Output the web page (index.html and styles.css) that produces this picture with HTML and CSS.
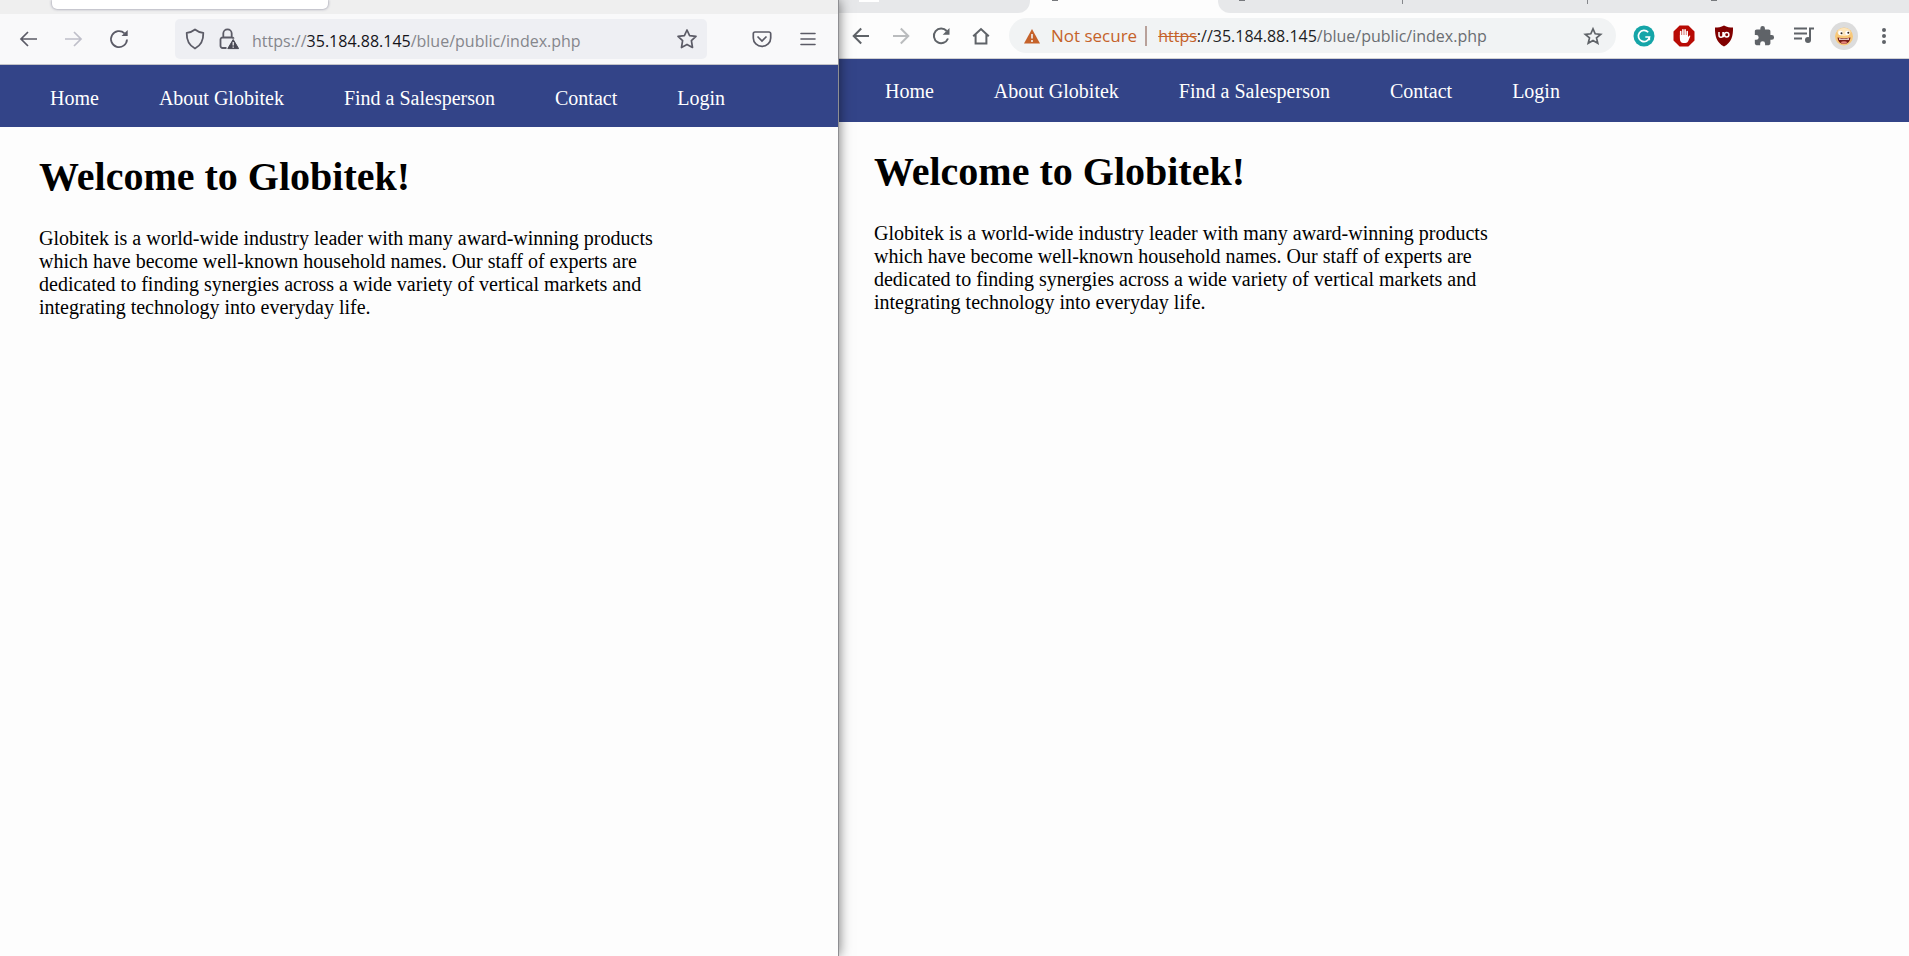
FILE: index.html
```html
<!DOCTYPE html>
<html lang="en">
<head>
<meta charset="utf-8">
<title>Globitek</title>
<link rel="stylesheet" href="styles.css">
</head>
<body>
<div class="desktop">
  <section class="window firefox" aria-label="Firefox window">
    <div class="ff-tabs"><div class="ff-tab"></div></div>
    <div class="ff-toolbar">
      <div class="ff-nav">
        <button class="icon-button" aria-label="Back"><svg width="20" height="20" viewBox="0 0 20 20"><path d="M18 10H2M9 3L2 10L9 17" fill="none" stroke="#5b5b66" stroke-width="1.7"/></svg></button>
        <button class="icon-button" aria-label="Forward"><svg width="20" height="20" viewBox="0 0 20 20"><path d="M1 10H17M10 3L17 10L10 17" fill="none" stroke="#bfbfc9" stroke-width="1.7"/></svg></button>
        <button class="icon-button" aria-label="Reload"><svg width="20" height="20" viewBox="0 0 20 20"><path d="M18 10.500A8 8 0 1 1 15.500 4.300" fill="none" stroke="#5b5b66" stroke-width="1.8"/><path d="M18.700 1V7H12.500Z" fill="#5b5b66"/></svg></button>
      </div>
      <div class="ff-address">
        <button class="icon-button" aria-label="Tracking protection"><svg width="20" height="22" viewBox="0 0 20 22"><path d="M10 1.500C12.500 3.500 15 4.600 18.300 4.900C18.500 12 16 17.500 10 20.500C4 17.500 1.500 12 1.700 4.900C5 4.600 7.500 3.500 10 1.500Z" fill="none" stroke="#5b5b66" stroke-width="1.800" stroke-linejoin="round"/></svg></button>
        <button class="icon-button" aria-label="Connection not secure"><svg width="20" height="22" viewBox="0 0 20 22"><path d="M4.300 9V5.500a4.200 4.200 0 0 1 8.400 0V9M7.500 20H3.500a2 2 0 0 1-2-2v-6.500a2 2 0 0 1 2-2h9.500a2 2 0 0 1 1.800 1.200" fill="none" stroke="#5b5b66" stroke-width="1.800"/><path d="M14.200 11.500L19.600 20.600H8.800Z" fill="#4a4a55" stroke="#4a4a55" stroke-linejoin="round"/><path d="M14.200 14v3.500M14.200 18.500v1.300" stroke="#f0f0f4" stroke-width="1.300"/></svg></button>
        <div class="url" role="textbox" contenteditable="true" spellcheck="false" aria-label="Address">https://<span class="host">35.184.88.145</span>/blue/public/index.php</div>
        <button class="icon-button" aria-label="Bookmark this page"><svg width="22" height="22" viewBox="0 0 22 22"><path d="M11 2L13.600 7.600L20 8.400L15.400 12.600L16.500 19.500L11 16.400L5.500 19.500L6.600 12.600L2 8.400L8.400 7.600Z" fill="none" stroke="#5b5b66" stroke-width="1.700" stroke-linejoin="round"/></svg></button>
      </div>
      <div class="ff-actions">
        <button class="icon-button" aria-label="Save to Pocket"><svg width="20" height="18" viewBox="0 0 20 18"><path d="M3 2H17a1.700 1.700 0 0 1 1.700 1.700V8a8.700 8.300 0 0 1-17.400 0V3.700A1.700 1.700 0 0 1 3 2ZM5.500 6.500L10 11L14.500 6.500" fill="none" stroke="#5b5b66" stroke-width="1.700"/></svg></button>
        <button class="icon-button" aria-label="Open menu"><svg width="16" height="18" viewBox="0 0 16 18"><path d="M1 3.500H15M1 9H15M1 14.500H15" stroke="#5b5b66" stroke-width="1.600" stroke-linecap="round"/></svg></button>
      </div>
    </div>
    <nav class="site-nav">
      <a href="#">Home</a><a href="#">About Globitek</a><a href="#">Find a Salesperson</a><a href="#">Contact</a><a href="#">Login</a>
    </nav>
    <main class="page">
      <h1>Welcome to Globitek!</h1>
      <p>Globitek is a world-wide industry leader with many award-winning products which have become well-known household names. Our staff of experts are dedicated to finding synergies across a wide variety of vertical markets and integrating technology into everyday life.</p>
    </main>
  </section>

  <section class="window chrome" aria-label="Chrome window">
    <div class="cr-tabs">
      <div class="cr-tab first"><span class="favicon"></span></div>
      <div class="cr-tab active"><span class="globe"></span></div>
      <div class="cr-tab rest"><span class="globe"></span><i class="divider"></i><i class="divider"></i><span class="globe end"></span></div>
    </div>
    <div class="cr-toolbar">
      <div class="cr-nav">
        <button class="icon-button" aria-label="Back"><svg width="20" height="20" viewBox="0 0 20 20"><path d="M18 10H3M10.200 2.500L2.700 10L10.200 17.500" fill="none" stroke="#5f6368" stroke-width="2"/></svg></button>
        <button class="icon-button" aria-label="Forward"><svg width="20" height="20" viewBox="0 0 20 20"><path d="M2 10H17M9.800 2.500L17.300 10L9.800 17.500" fill="none" stroke="#babcbe" stroke-width="2"/></svg></button>
        <button class="icon-button" aria-label="Reload"><svg width="20" height="20" viewBox="0 0 20 20"><path d="M17 12.500A7.300 7.300 0 1 1 15.700 5" fill="none" stroke="#5f6368" stroke-width="2"/><path d="M18.500 2V8.800H11.700Z" fill="#5f6368"/></svg></button>
        <button class="icon-button" aria-label="Home"><svg width="20" height="20" viewBox="0 0 20 20"><path d="M2.200 10.200L10 3L17.800 10.200M4.600 8.500V17.500H15.400V8.500" fill="none" stroke="#5f6368" stroke-width="2"/></svg></button>
      </div>
      <div class="cr-address">
        <button class="not-secure"><svg width="16" height="16" viewBox="0 0 16 16"><path d="M8 1L16 15.500H0Z" fill="#c5622a"/><path d="M8 6v4.500M8 12v2" stroke="#f1f3f4" stroke-width="1.600"/></svg><span>Not secure</span></button>
        <div class="url" role="textbox" contenteditable="true" spellcheck="false" aria-label="Address"><s>https</s><span class="slashes">://</span><span class="host">35.184.88.145</span>/blue/public/index.php</div>
        <button class="icon-button" aria-label="Bookmark this tab"><svg width="20" height="20" viewBox="0 0 20 20"><path d="M10 2.800L12.200 7.800L17.700 8.300L13.500 11.900L14.800 17.300L10 14.400L5.200 17.300L6.500 11.900L2.300 8.300L7.800 7.800Z" fill="none" stroke="#5f6368" stroke-width="1.700"/></svg></button>
      </div>
      <div class="cr-actions">
        <button class="icon-button" aria-label="Grammarly"><svg width="22" height="22" viewBox="0 0 22 22"><circle cx="11" cy="11" r="10.500" fill="#15a5a8"/><path d="M15.200 7.300A5.600 5.600 0 1 0 16.500 12H12.300M16.300 12V15.300" fill="none" stroke="#fff" stroke-width="1.700"/></svg></button>
        <button class="icon-button" aria-label="AdBlock"><svg width="22" height="22" viewBox="0 0 22 22"><path d="M6.600.5h8.800l6.100 6.100v8.800l-6.100 6.100H6.600L.5 15.400V6.600Z" fill="#b80b05"/><path d="M7.700 12.500V6.500M9.900 11V4.800M12.100 11V4.800M14.200 12V6.500" stroke="#fff" stroke-width="1.600" stroke-linecap="round"/><path d="M6.900 10h8.100V12l1.300-1.300c.8-.4 1.200.2.900.9L15.300 16c-.6 1.300-1.500 2-2.800 2H10.300c-2.300 0-3.400-1.800-3.400-4Z" fill="#fff"/></svg></button>
        <button class="icon-button" aria-label="uBlock Origin"><svg width="22" height="22" viewBox="0 0 22 22"><path d="M11 .5C14 2.200 17 2.500 20 2.500C20.200 11 18.500 17.500 11 21.500C3.500 17.500 1.800 11 2 2.500C5 2.500 8 2.200 11 .5Z" fill="#800000"/><path d="M6 7v3.200a2 2 0 0 0 4 0V7M10.500 12.200V7" fill="none" stroke="#fff" stroke-width="1.500"/><circle cx="13.700" cy="9.800" r="2.200" fill="none" stroke="#fff" stroke-width="1.500"/></svg></button>
        <button class="icon-button" aria-label="Extensions"><svg width="22" height="22" viewBox="0 0 24 24"><path d="M20.500 11H19V7c0-1.100-.9-2-2-2h-4V3.500a2.500 2.500 0 0 0-5 0V5H4c-1.100 0-2 .9-2 2v3.800h1.500a2.700 2.700 0 0 1 0 5.400H2V20c0 1.100.9 2 2 2h3.800v-1.500a2.700 2.700 0 0 1 5.400 0V22H17c1.100 0 2-.9 2-2v-4h1.500a2.500 2.500 0 0 0 0-5Z" fill="#5f6368"/></svg></button>
        <button class="icon-button" aria-label="Media controls"><svg width="22" height="22" viewBox="0 0 22 22"><path d="M1 3.500H14M1 8.500H14M1 13.500H9" stroke="#5f6368" stroke-width="2"/><path d="M17 15V3.500H21" fill="none" stroke="#5f6368" stroke-width="2"/><circle cx="15" cy="15" r="3" fill="#5f6368"/></svg></button>
        <button class="icon-button" aria-label="Profile"><svg width="28" height="28" viewBox="0 0 28 28"><circle cx="14" cy="14" r="14" fill="#dcdcdc"/><circle cx="14" cy="14.500" r="9" fill="#f8c878"/><ellipse cx="14" cy="10" rx="6.500" ry="4" fill="#fde6bd"/><circle cx="10.500" cy="11" r="2.300" fill="#fff"/><circle cx="17.500" cy="11" r="2.300" fill="#fff"/><circle cx="11.500" cy="11.300" r="1" fill="#32251a"/><circle cx="18.300" cy="10.700" r="1" fill="#32251a"/><path d="M7.500 15.500Q14 17 20.500 15.500Q20 22 14 22Q8 22 7.500 15.500Z" fill="#781b16"/><path d="M9 16.200Q14 17.200 19 16.200V17.700H9Z" fill="#fff"/><ellipse cx="14" cy="20.500" rx="3" ry="1.300" fill="#e5847a"/></svg></button>
        <button class="icon-button" aria-label="Menu"><svg width="22" height="22" viewBox="0 0 22 22" fill="#5f6368"><circle cx="11" cy="5" r="2"/><circle cx="11" cy="11" r="2"/><circle cx="11" cy="17" r="2"/></svg></button>
      </div>
    </div>
    <nav class="site-nav">
      <a href="#">Home</a><a href="#">About Globitek</a><a href="#">Find a Salesperson</a><a href="#">Contact</a><a href="#">Login</a>
    </nav>
    <main class="page">
      <h1>Welcome to Globitek!</h1>
      <p>Globitek is a world-wide industry leader with many award-winning products which have become well-known household names. Our staff of experts are dedicated to finding synergies across a wide variety of vertical markets and integrating technology into everyday life.</p>
    </main>
  </section>
</div>
</body>
</html>
```
FILE: styles.css
```css
* { box-sizing: border-box; }
body { margin: 0; background: #fdfdfd; font-family: "Liberation Serif", "Times New Roman", serif; font-size: 20px; line-height: 23px; color: #000; }
.desktop { display: flex; min-height: 100vh; overflow: hidden; }
.window { background: #fdfdfd; min-width: 0; }
.firefox { flex: 0 0 calc(44% - 1px); border-right: 1px solid #8e8e92; box-shadow: 0 0 12px rgba(0, 0, 0, .55); position: relative; z-index: 1; }
.chrome { flex: 1; margin-left: -4px; }

.icon-button { display: flex; align-items: center; justify-content: center; padding: 0; border: 0; background: none; flex: none; }
.icon-button svg { display: block; }

.ff-tabs { height: 14px; background: #efefef; padding-left: 52px; overflow: hidden; }
.ff-tab { width: 276px; height: 9px; background: #fff; border-radius: 0 0 5px 5px; box-shadow: 0 0 3px rgba(80, 80, 110, .7); }
.ff-toolbar { display: flex; align-items: center; height: 51px; padding: 0 22px 0 19px; background: #f9f9fa; border-bottom: 1px solid #c4c4c8; }
.ff-nav { display: flex; gap: 25px; }
.ff-address { display: flex; align-items: center; flex: 1; height: 40px; margin: 0 45px 0 46px; padding: 0 9px 0 10px; background: #eeeff3; border-radius: 5px; }
.ff-address .icon-button + .icon-button { margin-left: 14px; }
.ff-actions { display: flex; align-items: center; gap: 28px; }

.url { flex: 1; font-family: "Open Sans", "Segoe UI", sans-serif; font-size: 16px; line-height: 24px; white-space: nowrap; overflow: hidden; outline: 0; }
.firefox .url { margin-left: 13px; padding-top: 3px; color: #85868c; }
.firefox .host { color: #15141a; }

.cr-tabs { display: flex; height: 13px; background: #fdfdfd; }
.cr-tab { height: 13px; }
.first { width: 195px; padding-left: 24px; border-radius: 0 0 12px 0; background: #e7e8ea; }
.favicon { display: block; width: 20px; height: 2px; background: #fff; }
.active { width: 188px; padding-left: 22px; }
.rest { display: flex; flex: 1; background: #e7e8ea; border-radius: 0 0 0 12px; padding-left: 21px; }
.globe { display: block; width: 6px; height: 1px; background: #77797d; }
.divider { width: 1px; height: 4px; background: #85878b; margin-left: 157px; }
.divider + .divider { margin-left: 184px; }
.end { margin-left: 123px; }
.cr-toolbar { display: flex; align-items: center; height: 46px; padding: 0 5px 0 16px; background: #fdfdfd; border-bottom: 1px solid #d0d0d2; }
.cr-nav { display: flex; gap: 20px; }
.cr-address { display: flex; align-items: center; flex: 1; height: 35px; margin: 0 8px 0 18px; padding: 0 13px 0 15px; background: #f1f3f4; border-radius: 18px; }
.not-secure { display: flex; align-items: center; gap: 11px; padding: 0 8px 0 0; border: 0; border-right: 2px solid #b8a19a; background: none; font: 17px/20px "Open Sans", "Segoe UI", sans-serif; color: #c5622a; white-space: nowrap; }
.chrome .url { margin-left: 11px; color: #6a6d72; }
.url s { color: #c5622a; }
.chrome .host, .slashes { color: #202124; }
.cr-actions { display: flex; align-items: center; }
.cr-actions .icon-button { width: 40px; }

.site-nav { display: flex; gap: 60px; padding: 21px 50px 19px; background: #334488; }
.firefox .site-nav { padding: 22px 50px 17px; }
.site-nav a { color: #fff; text-decoration: none; white-space: nowrap; }
.page { padding: 27px 39px; }
h1 { margin: 0 0 27px; font-size: 40px; line-height: 46px; }
p { margin: 0; max-width: 625px; }
```
